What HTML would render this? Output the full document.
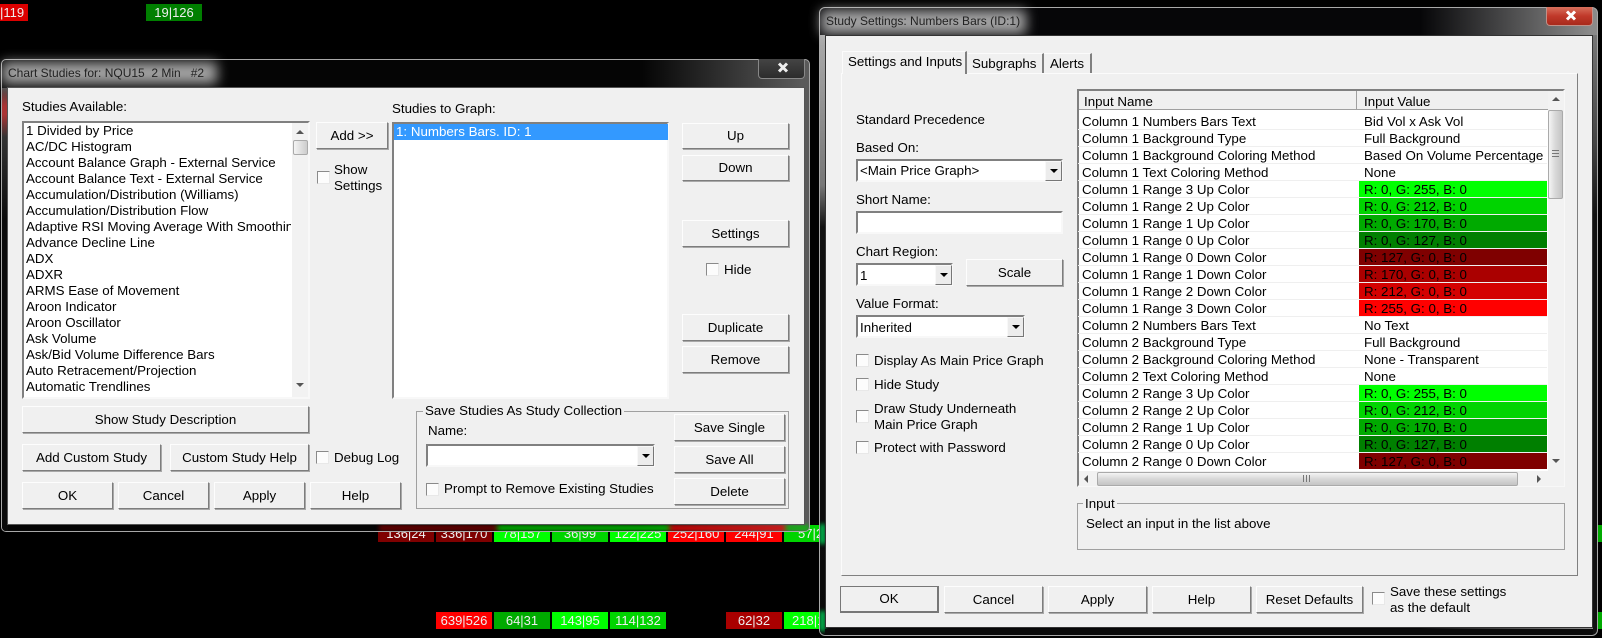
<!DOCTYPE html>
<html><head><meta charset="utf-8"><style>
html,body{margin:0;padding:0;background:#000;width:1602px;height:638px;overflow:hidden}
body{position:relative;font:13.33px/16px "Liberation Sans",sans-serif;color:#000}
div{position:absolute;box-sizing:border-box}
svg{position:absolute}
.t{white-space:nowrap;height:16px;margin-top:1px}
.s .t{margin-top:0}
.b{background:#f0f0f0;border:1px solid;border-color:#fdfdfd #7d7d7d #7d7d7d #fdfdfd;box-shadow:1px 1px 0 #a8a8a8;text-align:center;white-space:nowrap;display:flex;align-items:center;justify-content:center}
.k{width:13px;height:13px;background:#fcfcfc;border:1px solid;border-color:#8a8a8a #e8e8e8 #e8e8e8 #8a8a8a}
.s{background:#fff;border:2px solid;border-color:#808080 #f8f8f8 #f8f8f8 #808080}
.a{background:#ececec;border:1px solid;border-color:#f8f8f8 #777 #777 #f8f8f8}
.a:after{content:"";position:absolute;left:4px;top:7px;border:4px solid transparent;border-top:4px solid #000;border-bottom:0}
.g{border:1px solid #a0a0a0}
.n{height:17px;color:#eee;font-size:13px;line-height:17px;text-align:center;white-space:nowrap;overflow:hidden}
.r{left:1082px;width:270px}
.v{left:1364px}
.c{left:1359px;width:188px;height:16px}
.p{left:1078px;width:469px;height:1px;background:#efefef}
.w{background:linear-gradient(90deg,#f4f4f4,#d8d8d8 50%,#c4c4c4);border:1px solid #aaa;border-radius:2px}
.h{background:linear-gradient(180deg,#f4f4f4,#d8d8d8 50%,#c4c4c4);border:1px solid #aaa;border-radius:2px}
</style></head><body>

<div class="n" style="left:0;top:4px;width:28px;background:#dc0000;text-align:left;padding-left:0">|119</div>
<div class="n" style="left:146px;top:4px;width:56px;background:#007f00">19|126</div>

<div class="n" style="left:378px;top:525px;width:56px;background:#7f0000">136|24</div>
<div class="n" style="left:436px;top:525px;width:56px;background:#7f0000">336|170</div>
<div class="n" style="left:494px;top:525px;width:56px;background:#00ff00">78|157</div>
<div class="n" style="left:552px;top:525px;width:56px;background:#00d400">36|99</div>
<div class="n" style="left:610px;top:525px;width:56px;background:#00ff00">122|225</div>
<div class="n" style="left:668px;top:525px;width:56px;background:#ff0000">252|160</div>
<div class="n" style="left:726px;top:525px;width:56px;background:#ff0000">244|91</div>
<div class="n" style="left:784px;top:525px;width:35px;background:#00d400;text-align:left;padding-left:14px">57|2</div>

<div class="n" style="left:436px;top:612px;width:56px;background:#ff0000">639|526</div>
<div class="n" style="left:494px;top:612px;width:56px;background:#00aa00">64|31</div>
<div class="n" style="left:552px;top:612px;width:56px;background:#00ff00">143|95</div>
<div class="n" style="left:610px;top:612px;width:56px;background:#00d400">114|132</div>
<div class="n" style="left:726px;top:612px;width:56px;background:#aa0000">62|32</div>
<div class="n" style="left:784px;top:612px;width:35px;background:#00ff00;text-align:left;padding-left:8px">218|1</div>
<div style="left:1598px;top:525px;width:4px;height:17px;background:#00aa00"></div>
<div style="left:1598px;top:612px;width:4px;height:17px;background:#00aa00"></div>

<!-- Dialog 1 -->
<div style="left:1px;top:59px;width:809px;height:473px;border:1px solid #a8a8a8;border-radius:5px;overflow:hidden;background:linear-gradient(90deg,#050505 0,#050505 640px,#5a5a5a 800px)">
<div style="left:0;top:28px;width:6px;height:445px;background:linear-gradient(180deg,#444,#a33 4%,#a33 6%,#333 11%,#0a0a0a 30%)"></div>
<div style="left:377px;top:465px;width:430px;height:6px;filter:blur(2px);opacity:.8;background:linear-gradient(90deg,#7f0000 0,#7f0000 27%,#00dd00 28%,#00dd00 67%,#f00 68%,#f00 94%,#0c0 95%)"></div>
</div>
<div style="left:2px;top:62px;width:215px;height:22px;background:#d8d8d8;filter:blur(6px);opacity:.75"></div>
<div class="t" style="left:8px;top:64px;color:#222;font-size:12px">Chart Studies for: NQU15&nbsp; 2 Min &nbsp; #2</div>
<div style="left:758px;top:59px;width:47px;height:20px;border:1px solid #888;border-top:0;border-radius:0 0 4px 4px;background:linear-gradient(180deg,#444,#2c2c2c)"></div>
<svg style="left:777px;top:62px" width="12" height="11" viewBox="0 0 12 11"><path d="M2 1.5 L10 9.5 M10 1.5 L2 9.5" stroke="#eee" stroke-width="3" fill="none"/></svg>

<div style="left:7px;top:87px;width:798px;height:438px;background:#f0f0f0;border:1px solid #555"></div>

<div class="t" style="left:22px;top:98px">Studies Available:</div>
<div class="s" style="left:22px;top:121px;width:288px;height:278px;overflow:hidden;border-right:2px solid #f8f8f8;padding:0">
<div class="t" style="left:2px;top:0">1 Divided by Price</div>
<div class="t" style="left:2px;top:16px">AC/DC Histogram</div>
<div class="t" style="left:2px;top:32px">Account Balance Graph - External Service</div>
<div class="t" style="left:2px;top:48px">Account Balance Text - External Service</div>
<div class="t" style="left:2px;top:64px">Accumulation/Distribution (Williams)</div>
<div class="t" style="left:2px;top:80px">Accumulation/Distribution Flow</div>
<div class="t" style="left:2px;top:96px;width:265px;overflow:hidden">Adaptive RSI Moving Average With Smoothing</div>
<div class="t" style="left:2px;top:112px">Advance Decline Line</div>
<div class="t" style="left:2px;top:128px">ADX</div>
<div class="t" style="left:2px;top:144px">ADXR</div>
<div class="t" style="left:2px;top:160px">ARMS Ease of Movement</div>
<div class="t" style="left:2px;top:176px">Aroon Indicator</div>
<div class="t" style="left:2px;top:192px">Aroon Oscillator</div>
<div class="t" style="left:2px;top:208px">Ask Volume</div>
<div class="t" style="left:2px;top:224px">Ask/Bid Volume Difference Bars</div>
<div class="t" style="left:2px;top:240px">Auto Retracement/Projection</div>
<div class="t" style="left:2px;top:256px">Automatic Trendlines</div>
<div class="t" style="left:2px;top:272px">Average Daily Range</div>
<div style="left:268px;top:0;width:16px;height:276px;background:#f2f2f2"></div>
<div style="left:272px;top:7px;border:4px solid transparent;border-bottom:4px solid #555;border-top:0"></div>
<div class="h" style="left:269px;top:17px;width:15px;height:15px;background:linear-gradient(90deg,#f4f4f4,#ccc)"></div>
<div style="left:272px;top:260px;border:4px solid transparent;border-top:4px solid #555;border-bottom:0"></div>
</div>

<div class="b" style="left:316px;top:122px;width:72px;height:27px">Add &gt;&gt;</div>
<div class="k" style="left:317px;top:171px"></div>
<div class="t" style="left:334px;top:161px">Show</div>
<div class="t" style="left:334px;top:177px">Settings</div>

<div class="t" style="left:392px;top:100px">Studies to Graph:</div>
<div class="s" style="left:392px;top:122px;width:277px;height:277px"></div>
<div style="left:394px;top:124px;width:274px;height:16px;background:#3399ff"></div>
<div class="t" style="left:396px;top:123px;color:#fff">1: Numbers Bars. ID: 1</div>

<div class="b" style="left:682px;top:123px;width:107px;height:26px">Up</div>
<div class="b" style="left:682px;top:155px;width:107px;height:26px">Down</div>
<div class="b" style="left:682px;top:220px;width:107px;height:27px">Settings</div>
<div class="k" style="left:706px;top:263px"></div>
<div class="t" style="left:724px;top:261px">Hide</div>
<div class="b" style="left:682px;top:314px;width:107px;height:27px">Duplicate</div>
<div class="b" style="left:682px;top:346px;width:107px;height:27px">Remove</div>

<div class="b" style="left:22px;top:406px;width:287px;height:27px">Show Study Description</div>
<div class="b" style="left:22px;top:444px;width:139px;height:27px">Add Custom Study</div>
<div class="b" style="left:170px;top:444px;width:139px;height:27px">Custom Study Help</div>
<div class="k" style="left:316px;top:451px"></div>
<div class="t" style="left:334px;top:449px">Debug Log</div>
<div class="b" style="left:22px;top:482px;width:91px;height:27px">OK</div>
<div class="b" style="left:118px;top:482px;width:91px;height:27px">Cancel</div>
<div class="b" style="left:214px;top:482px;width:91px;height:27px">Apply</div>
<div class="b" style="left:310px;top:482px;width:91px;height:27px">Help</div>

<div class="g" style="left:416px;top:411px;width:373px;height:98px"></div>
<div class="t" style="left:423px;top:402px;background:#f0f0f0;padding:0 2px">Save Studies As Study Collection</div>
<div class="t" style="left:428px;top:422px">Name:</div>
<div class="s" style="left:426px;top:444px;width:229px;height:23px"></div>
<div class="a" style="left:637px;top:446px;width:17px;height:20px"></div>
<div class="k" style="left:426px;top:483px"></div>
<div class="t" style="left:444px;top:480px">Prompt to Remove Existing Studies</div>
<div class="b" style="left:674px;top:414px;width:111px;height:27px">Save Single</div>
<div class="b" style="left:674px;top:446px;width:111px;height:27px">Save All</div>
<div class="b" style="left:674px;top:478px;width:111px;height:27px">Delete</div>

<!-- Dialog 2 -->
<div style="left:819px;top:7px;width:779px;height:629px;border:1px solid #a8a8a8;border-radius:6px;overflow:hidden;background:linear-gradient(90deg,#060608 0,#060608 600px,#8a8a8a 770px)">
<div style="left:0;top:27px;width:5px;height:600px;background:linear-gradient(180deg,#aaa,#777 25%,#111 32%,#0a0a0a)"></div>
<div style="left:0;top:516px;width:5px;height:20px;background:#0c5;filter:blur(2px)"></div>
<div style="left:0;top:603px;width:5px;height:20px;background:#0c5;filter:blur(2px)"></div>
<div style="left:773px;top:27px;width:5px;height:600px;background:linear-gradient(180deg,#777,#444 18%,#111 30%,#111)"></div>
<div style="left:5px;top:621px;width:768px;height:7px;background:#0a0a0a"></div>
</div>
<div style="left:821px;top:10px;width:205px;height:24px;background:#d8d8d8;filter:blur(6px);opacity:.75"></div>
<div class="t" style="left:826px;top:12px;color:#222;font-size:12px">Study Settings: Numbers Bars (ID:1)</div>
<div style="left:1546px;top:7px;width:47px;height:19px;border:1px solid #c09088;border-top:0;border-radius:0 0 4px 4px;background:linear-gradient(180deg,#d8705c,#c0392a 50%,#a82a1c)"></div>
<svg style="left:1565px;top:10px" width="12" height="11" viewBox="0 0 12 11"><path d="M2 1.5 L10 9.5 M10 1.5 L2 9.5" stroke="#fff" stroke-width="3" fill="none"/></svg>

<div style="left:825px;top:35px;width:768px;height:593px;background:#f0f0f0;border:1px solid #333"></div>

<div style="left:841px;top:73px;width:737px;height:503px;border:1px solid;border-color:#fbfbfb #808080 #808080 #fbfbfb"></div>
<div style="left:842px;top:51px;width:125px;height:23px;background:#f0f0f0;border-top:1px solid #fbfbfb;border-left:1px solid #fbfbfb;border-right:2px solid #808080"></div>
<div class="t" style="left:848px;top:53px">Settings and Inputs</div>
<div style="left:968px;top:53px;width:76px;height:20px;background:#f0f0f0;border-top:1px solid #fbfbfb;border-right:2px solid #808080"></div>
<div class="t" style="left:972px;top:55px">Subgraphs</div>
<div style="left:1044px;top:53px;width:48px;height:20px;background:#f0f0f0;border-top:1px solid #fbfbfb;border-right:2px solid #808080"></div>
<div class="t" style="left:1050px;top:55px">Alerts</div>

<div class="t" style="left:856px;top:111px">Standard Precedence</div>
<div class="t" style="left:856px;top:139px">Based On:</div>
<div class="s" style="left:856px;top:159px;width:207px;height:23px"></div>
<div class="t" style="left:860px;top:162px">&lt;Main Price Graph&gt;</div>
<div class="a" style="left:1045px;top:161px;width:17px;height:20px"></div>
<div class="t" style="left:856px;top:191px">Short Name:</div>
<div class="s" style="left:856px;top:211px;width:207px;height:23px"></div>
<div class="t" style="left:856px;top:243px">Chart Region:</div>
<div class="s" style="left:856px;top:263px;width:97px;height:23px"></div>
<div class="t" style="left:860px;top:267px">1</div>
<div class="a" style="left:935px;top:265px;width:17px;height:20px"></div>
<div class="b" style="left:966px;top:259px;width:97px;height:27px">Scale</div>
<div class="t" style="left:856px;top:295px">Value Format:</div>
<div class="s" style="left:856px;top:315px;width:169px;height:23px"></div>
<div class="t" style="left:860px;top:319px">Inherited</div>
<div class="a" style="left:1007px;top:317px;width:17px;height:20px"></div>
<div class="k" style="left:856px;top:354px"></div>
<div class="t" style="left:874px;top:352px">Display As Main Price Graph</div>
<div class="k" style="left:856px;top:378px"></div>
<div class="t" style="left:874px;top:376px">Hide Study</div>
<div class="k" style="left:856px;top:410px"></div>
<div class="t" style="left:874px;top:400px">Draw Study Underneath</div>
<div class="t" style="left:874px;top:416px">Main Price Graph</div>
<div class="k" style="left:856px;top:441px"></div>
<div class="t" style="left:874px;top:439px">Protect with Password</div>

<!-- Table -->
<div class="s" style="left:1077px;top:89px;width:488px;height:398px;background:#fff"></div>
<div style="left:1079px;top:91px;width:469px;height:19px;background:#f0f0f0;border-bottom:1px solid #a0a0a0"></div>
<div style="left:1356px;top:91px;width:1px;height:19px;background:#a0a0a0"></div>
<div class="t" style="left:1084px;top:93px">Input Name</div>
<div class="t" style="left:1364px;top:93px">Input Value</div>

<div class="p" style="top:129px"></div><div class="p" style="top:146px"></div><div class="p" style="top:163px"></div><div class="p" style="top:180px"></div><div class="p" style="top:197px"></div><div class="p" style="top:214px"></div><div class="p" style="top:231px"></div><div class="p" style="top:248px"></div><div class="p" style="top:265px"></div><div class="p" style="top:282px"></div><div class="p" style="top:299px"></div><div class="p" style="top:316px"></div><div class="p" style="top:333px"></div><div class="p" style="top:350px"></div><div class="p" style="top:367px"></div><div class="p" style="top:384px"></div><div class="p" style="top:401px"></div><div class="p" style="top:418px"></div><div class="p" style="top:435px"></div><div class="p" style="top:452px"></div>

<div class="t r" style="top:113px">Column 1 Numbers Bars Text</div><div class="t v" style="top:113px">Bid Vol x Ask Vol</div>
<div class="t r" style="top:130px">Column 1 Background Type</div><div class="t v" style="top:130px">Full Background</div>
<div class="t r" style="top:147px">Column 1 Background Coloring Method</div><div class="t v" style="top:147px">Based On Volume Percentage</div>
<div class="t r" style="top:164px">Column 1 Text Coloring Method</div><div class="t v" style="top:164px">None</div>
<div class="t r" style="top:181px">Column 1 Range 3 Up Color</div><div class="c" style="top:181px;background:#00ff00"></div><div class="t v" style="top:181px">R: 0, G: 255, B: 0</div>
<div class="t r" style="top:198px">Column 1 Range 2 Up Color</div><div class="c" style="top:198px;background:#00d400"></div><div class="t v" style="top:198px">R: 0, G: 212, B: 0</div>
<div class="t r" style="top:215px">Column 1 Range 1 Up Color</div><div class="c" style="top:215px;background:#00aa00"></div><div class="t v" style="top:215px">R: 0, G: 170, B: 0</div>
<div class="t r" style="top:232px">Column 1 Range 0 Up Color</div><div class="c" style="top:232px;background:#007f00"></div><div class="t v" style="top:232px">R: 0, G: 127, B: 0</div>
<div class="t r" style="top:249px">Column 1 Range 0 Down Color</div><div class="c" style="top:249px;background:#7f0000"></div><div class="t v" style="top:249px">R: 127, G: 0, B: 0</div>
<div class="t r" style="top:266px">Column 1 Range 1 Down Color</div><div class="c" style="top:266px;background:#aa0000"></div><div class="t v" style="top:266px">R: 170, G: 0, B: 0</div>
<div class="t r" style="top:283px">Column 1 Range 2 Down Color</div><div class="c" style="top:283px;background:#d40000"></div><div class="t v" style="top:283px">R: 212, G: 0, B: 0</div>
<div class="t r" style="top:300px">Column 1 Range 3 Down Color</div><div class="c" style="top:300px;background:#ff0000"></div><div class="t v" style="top:300px">R: 255, G: 0, B: 0</div>
<div class="t r" style="top:317px">Column 2 Numbers Bars Text</div><div class="t v" style="top:317px">No Text</div>
<div class="t r" style="top:334px">Column 2 Background Type</div><div class="t v" style="top:334px">Full Background</div>
<div class="t r" style="top:351px">Column 2 Background Coloring Method</div><div class="t v" style="top:351px">None - Transparent</div>
<div class="t r" style="top:368px">Column 2 Text Coloring Method</div><div class="t v" style="top:368px">None</div>
<div class="t r" style="top:385px">Column 2 Range 3 Up Color</div><div class="c" style="top:385px;background:#00ff00"></div><div class="t v" style="top:385px">R: 0, G: 255, B: 0</div>
<div class="t r" style="top:402px">Column 2 Range 2 Up Color</div><div class="c" style="top:402px;background:#00d400"></div><div class="t v" style="top:402px">R: 0, G: 212, B: 0</div>
<div class="t r" style="top:419px">Column 2 Range 1 Up Color</div><div class="c" style="top:419px;background:#00aa00"></div><div class="t v" style="top:419px">R: 0, G: 170, B: 0</div>
<div class="t r" style="top:436px">Column 2 Range 0 Up Color</div><div class="c" style="top:436px;background:#007f00"></div><div class="t v" style="top:436px">R: 0, G: 127, B: 0</div>
<div class="t r" style="top:453px">Column 2 Range 0 Down Color</div><div class="c" style="top:453px;background:#7f0000"></div><div class="t v" style="top:453px">R: 127, G: 0, B: 0</div>

<!-- Scrollbars -->
<div style="left:1548px;top:91px;width:16px;height:380px;background:#f2f2f2"></div>
<div style="left:1552px;top:97px;border:4px solid transparent;border-bottom:4px solid #555;border-top:0"></div>
<div class="w" style="left:1548px;top:110px;width:15px;height:89px"></div>
<div style="left:1552px;top:150px;width:7px;height:7px;border-top:1px solid #777;border-bottom:1px solid #777"></div>
<div style="left:1552px;top:153px;width:7px;height:1px;background:#777"></div>
<div style="left:1552px;top:459px;border:4px solid transparent;border-top:4px solid #555;border-bottom:0"></div>
<div style="left:1079px;top:471px;width:485px;height:15px;background:#f2f2f2"></div>
<div style="left:1084px;top:475px;border:4px solid transparent;border-right:4px solid #555;border-left:0"></div>
<div class="h" style="left:1097px;top:472px;width:421px;height:14px"></div>
<div style="left:1303px;top:475px;width:7px;height:7px;border-left:1px solid #777;border-right:1px solid #777"></div>
<div style="left:1306px;top:475px;width:1px;height:7px;background:#777"></div>
<div style="left:1537px;top:475px;border:4px solid transparent;border-left:4px solid #555;border-right:0"></div>

<div class="g" style="left:1077px;top:503px;width:488px;height:47px"></div>
<div class="t" style="left:1083px;top:495px;background:#f0f0f0;padding:0 2px">Input</div>
<div class="t" style="left:1086px;top:515px">Select an input in the list above</div>

<div class="b" style="left:840px;top:586px;width:99px;height:27px;border-color:#777;border-width:1px 2px 2px 1px;box-shadow:none">OK</div>
<div class="b" style="left:944px;top:586px;width:99px;height:27px">Cancel</div>
<div class="b" style="left:1048px;top:586px;width:99px;height:27px">Apply</div>
<div class="b" style="left:1152px;top:586px;width:99px;height:27px">Help</div>
<div class="b" style="left:1256px;top:586px;width:107px;height:27px">Reset Defaults</div>
<div class="k" style="left:1372px;top:592px"></div>
<div class="t" style="left:1390px;top:583px">Save these settings</div>
<div class="t" style="left:1390px;top:599px">as the default</div>
</body></html>
